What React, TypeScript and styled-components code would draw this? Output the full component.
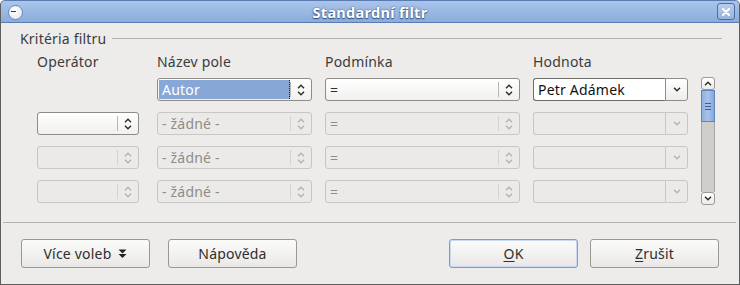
import React from "react";
import styled, { createGlobalStyle } from "styled-components";

const GlobalStyle = createGlobalStyle`
  html, body {
    margin: 0;
    padding: 0;
    background: #ffffff;
  }
  body {
    font-family: "Noto Sans", "DejaVu Sans", sans-serif;
    font-size: 14px;
    letter-spacing: 0.2px;
    color: #3c3c3c;
  }
`;

const Window = styled.div`
  width: 740px;
  height: 285px;
  box-sizing: border-box;
  display: flex;
  flex-direction: column;
  background: #edeceb;
  border: 1px solid #5d5d5d;
  border-top: none;
  border-radius: 5px 5px 0 0;
  overflow: hidden;
`;

const TitleBar = styled.div`
  height: 23px;
  box-sizing: border-box;
  display: flex;
  align-items: center;
  justify-content: center;
  position: relative;
  background: linear-gradient(#aac5ea, #8aacdb);
  border: 1px solid #5b7cb3;
  border-radius: 5px 5px 0 0;
  margin: 0 -1px;
`;

const Title = styled.div`
  font-weight: bold;
  font-size: 14.5px;
  letter-spacing: 0.3px;
  color: #ffffff;
  text-shadow: 0 0 2px #34517f, 0 1px 1px #34517f;
`;

const MenuIcon = styled.div`
  position: absolute;
  left: 7px;
  top: 4px;
  width: 13px;
  height: 13px;
  border-radius: 50%;
  background: radial-gradient(circle at 40% 35%, #ffffff, #dfe4ea);
  border: 1px solid #6b86b4;
  &::after {
    content: "";
    position: absolute;
    left: 2px;
    top: 5px;
    width: 5px;
    height: 1px;
    background: #3a3a3a;
  }
`;

const CloseButton = styled.div`
  position: absolute;
  right: 4px;
  top: 2px;
  width: 18px;
  height: 17px;
  box-sizing: border-box;
  border: 1px solid #4f6c9e;
  border-radius: 3px;
  background: linear-gradient(#b7cdee, #96b3de);
  display: flex;
  align-items: center;
  justify-content: center;
`;

const Body = styled.div`
  flex: 1;
  display: flex;
  flex-direction: column;
`;

const Legend = styled.div`
  display: flex;
  align-items: center;
  height: 16px;
  margin: 7px 17px 0 19px;
`;

const LegendText = styled.span`
  color: #3c3c3c;
  white-space: nowrap;
`;

const LegendLine = styled.div`
  flex: 1;
  height: 1px;
  margin-left: 6px;
  background: #b4b2af;
`;

const Grid = styled.div`
  display: grid;
  grid-template-columns: 107px 155px 195px 155px 14px;
  grid-template-rows: 16px repeat(4, 23px);
  column-gap: 13px;
  row-gap: 11px;
  margin: 5px 0 0 36px;
`;

const Header = styled.div`
  align-self: start;
  margin-top: 3px;
  line-height: 16px;
  color: #3c3c3c;
`;

const Field = styled.div<{ $disabled?: boolean; $w?: number }>`
  width: ${(p) => (p.$w ? `${p.$w}px` : "100%")};
  height: 23px;
  box-sizing: border-box;
  display: flex;
  align-items: stretch;
  border: 1px solid ${(p) => (p.$disabled ? "#c9c7c4" : "#8e8c89")};
  border-radius: 3px;
  background: ${(p) =>
    p.$disabled ? "#ebeae8" : "linear-gradient(#ffffff, #f1f0ee)"};
  color: ${(p) => (p.$disabled ? "#8e8c89" : "#2e2e2e")};
`;

const FieldText = styled.div<{ $selected?: boolean }>`
  flex: 1;
  display: flex;
  align-items: center;
  padding-left: 3px;
  margin: 1px 0 1px 1px;
  white-space: nowrap;
  background: ${(p) => (p.$selected ? "#87a8d7" : "transparent")};
  color: ${(p) => (p.$selected ? "#ffffff" : "inherit")};
  border-right: ${(p) => (p.$selected ? "1px dotted #1e1e1e" : "none")};
`;

const SpinBox = styled.div<{ $disabled?: boolean }>`
  width: 21px;
  display: flex;
  flex-direction: column;
  align-items: center;
  justify-content: center;
  gap: 2px;
  position: relative;
  &::before {
    content: "";
    position: absolute;
    left: 0;
    top: 3px;
    bottom: 3px;
    width: 1px;
    background: ${(p) => (p.$disabled ? "#d5d3d0" : "#b9b7b4")};
  }
`;

const ComboInput = styled.div<{ $disabled?: boolean }>`
  flex: 1;
  display: flex;
  align-items: center;
  padding-left: 4px;
  background: ${(p) => (p.$disabled ? "#ebeae8" : "#ffffff")};
  border: 1px solid ${(p) => (p.$disabled ? "#c9c7c4" : "#6f6d6a")};
  border-right: none;
  border-radius: 3px 0 0 3px;
  color: #111111;
  white-space: nowrap;
`;

const ComboButton = styled.div<{ $disabled?: boolean }>`
  width: 21px;
  display: flex;
  align-items: center;
  justify-content: center;
  border: 1px solid ${(p) => (p.$disabled ? "#c9c7c4" : "#8e8c89")};
  border-radius: 0 3px 3px 0;
  background: ${(p) =>
    p.$disabled ? "#ebeae8" : "linear-gradient(#ffffff, #eeedeb)"};
`;

const Combo = styled.div`
  display: flex;
  height: 23px;
  box-sizing: border-box;
`;

const ScrollBar = styled.div`
  grid-column: 5;
  grid-row: 2 / span 4;
  margin: -1px 0 -2px;
  display: flex;
  flex-direction: column;
`;

const ScrollButton = styled.div`
  height: 13px;
  box-sizing: border-box;
  border: 1px solid #9b9996;
  border-radius: 3px;
  background: linear-gradient(#ffffff, #eceae8);
  display: flex;
  align-items: center;
  justify-content: center;
`;

const Track = styled.div`
  flex: 1;
  display: flex;
  flex-direction: column;
  background: #cfcdca;
  border: 1px solid #a8a6a3;
  border-top: none;
  border-bottom: none;
`;

const Thumb = styled.div`
  height: 32px;
  box-sizing: border-box;
  margin: 0 -1px;
  border: 1px solid #5f84bd;
  background: linear-gradient(90deg, #8fb0df, #a9c3ea 50%, #86a8da);
  display: flex;
  flex-direction: column;
  align-items: center;
  justify-content: center;
  gap: 2px;
`;

const Grip = styled.div`
  width: 6px;
  height: 1px;
  background: #3f5f92;
`;

const Separator = styled.div`
  height: 1px;
  background: #b4b2af;
  margin: 19px 3px 0 2px;
`;

const ButtonBar = styled.div`
  display: flex;
  align-items: center;
  margin: 16px 20px 0 20px;
`;

const Button = styled.button<{ $focused?: boolean; $gapLeft?: number }>`
  width: 129px;
  height: 29px;
  box-sizing: border-box;
  display: flex;
  align-items: center;
  justify-content: center;
  gap: 7px;
  padding: 0;
  margin-left: ${(p) => p.$gapLeft ?? 0}px;
  font-family: inherit;
  font-size: 14px;
  letter-spacing: 0.2px;
  color: #2e2e2e;
  border: 1px solid ${(p) => (p.$focused ? "#7b9dd1" : "#9a9895")};
  border-radius: 3px;
  background: linear-gradient(#fbfbfa, #e9e8e6);
  box-shadow: ${(p) => (p.$focused ? "inset 0 0 0 1px #c8d8f0" : "none")};
`;

const Spacer = styled.div`
  flex: 1;
`;

const Mnemonic = styled.span`
  text-decoration: underline;
  text-underline-offset: 2px;
`;

function Chevron({ up, color }: { up?: boolean; color: string }) {
  return (
    <svg width="8" height="5" viewBox="0 0 8 5">
      <path
        d={up ? "M1 4.2 L4 1.2 L7 4.2" : "M1 0.8 L4 3.8 L7 0.8"}
        fill="none"
        stroke={color}
        strokeWidth="1.4"
      />
    </svg>
  );
}

function Spin({ disabled }: { disabled?: boolean }) {
  const c = disabled ? "#b5b3b0" : "#2a2a2a";
  return (
    <SpinBox $disabled={disabled}>
      <Chevron up color={c} />
      <Chevron color={c} />
    </SpinBox>
  );
}

function ListBox({
  text,
  disabled,
  selected,
  width,
}: {
  text?: string;
  disabled?: boolean;
  selected?: boolean;
  width?: number;
}) {
  return (
    <Field $disabled={disabled} $w={width}>
      <FieldText $selected={selected}>{text}</FieldText>
      <Spin disabled={disabled} />
    </Field>
  );
}

function ValueCombo({ text, disabled }: { text?: string; disabled?: boolean }) {
  return (
    <Combo>
      <ComboInput $disabled={disabled}>{text}</ComboInput>
      <ComboButton $disabled={disabled}>
        <Chevron color={disabled ? "#b5b3b0" : "#2a2a2a"} />
      </ComboButton>
    </Combo>
  );
}

function MoreIcon() {
  return (
    <svg width="9" height="10" viewBox="0 0 9 10">
      <path d="M0.5 0.5 H8.5 L4.5 4.5 Z" fill="#222" />
      <path d="M0.5 5 H8.5 L4.5 9 Z" fill="#222" />
    </svg>
  );
}

const rows = [1, 2, 3];

export default function App() {
  return (
    <>
      <GlobalStyle />
      <Window>
        <TitleBar>
          <MenuIcon />
          <Title>Standardní filtr</Title>
          <CloseButton>
            <svg width="10" height="10" viewBox="0 0 10 10">
              <path
                d="M2 2 L8 8 M8 2 L2 8"
                stroke="#ffffff"
                strokeWidth="2.2"
                strokeLinecap="round"
              />
            </svg>
          </CloseButton>
        </TitleBar>
        <Body>
          <Legend>
            <LegendText>Kritéria filtru</LegendText>
            <LegendLine />
          </Legend>
          <Grid>
            <Header>Operátor</Header>
            <Header>Název pole</Header>
            <Header>Podmínka</Header>
            <Header>Hodnota</Header>
            <div />

            <div />
            <ListBox text="Autor" selected />
            <ListBox text="=" />
            <ValueCombo text="Petr Adámek" />
            <ScrollBar>
              <ScrollButton>
                <Chevron up color="#2a2a2a" />
              </ScrollButton>
              <Track>
                <Thumb>
                  <Grip />
                  <Grip />
                  <Grip />
                </Thumb>
              </Track>
              <ScrollButton>
                <Chevron color="#2a2a2a" />
              </ScrollButton>
            </ScrollBar>

            {rows.map((r) => (
              <React.Fragment key={r}>
                <ListBox width={102} disabled={r > 1} />
                <ListBox text="- žádné -" disabled />
                <ListBox text="=" disabled />
                <ValueCombo disabled />
              </React.Fragment>
            ))}
          </Grid>
          <Separator />
          <ButtonBar>
            <Button>
              Více voleb <MoreIcon />
            </Button>
            <Button $gapLeft={18}>Nápověda</Button>
            <Spacer />
            <Button $focused>
              <span>
                <Mnemonic>O</Mnemonic>K
              </span>
            </Button>
            <Button $gapLeft={12}>
              <span>
                <Mnemonic>Z</Mnemonic>rušit
              </span>
            </Button>
          </ButtonBar>
        </Body>
      </Window>
    </>
  );
}
